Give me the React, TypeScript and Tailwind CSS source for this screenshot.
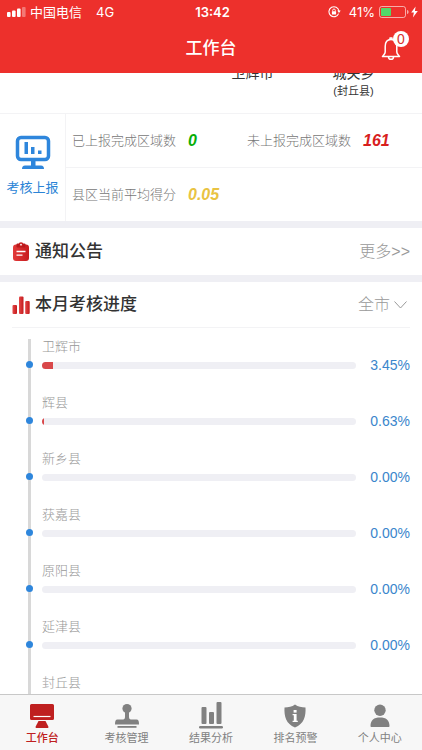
import React from "react";

const sans = "font-['Liberation_Sans','Noto_Sans_CJK_SC',sans-serif]";

const regions = [
  { name: "卫辉市", value: 3.45 },
  { name: "辉县", value: 0.63 },
  { name: "新乡县", value: 0 },
  { name: "获嘉县", value: 0 },
  { name: "原阳县", value: 0 },
  { name: "延津县", value: 0 },
  { name: "封丘县", value: 0 },
];

function StatusBar() {
  return (
    <div className="grid h-6 grid-cols-[1fr_auto_1fr] items-center pr-1 pl-[7px] font-['Inter','Noto_Sans_CJK_SC',sans-serif] text-[13px] leading-6">
      <div className="flex items-center">
        <svg width="19" height="10" viewBox="0 0 19 10" fill="white" aria-hidden="true">
          <rect x="0" y="5" width="3.6" height="5" rx="1" />
          <rect x="5" y="3.5" width="3.6" height="6.5" rx="1" />
          <rect x="10" y="1.5" width="3.6" height="8.5" rx="1" />
          <rect x="15" y="0" width="3.6" height="10" rx="1" opacity="0.35" />
        </svg>
        <span className="ml-1">中国电信</span>
        <span className="ml-3.5">4G</span>
      </div>
      <span className="font-semibold">13:42</span>
      <div className="flex items-center justify-end">
        <svg width="13" height="12" viewBox="0 0 13 12" fill="none" stroke="white" aria-hidden="true">
          <path d="M10.6 7.6A5 5 0 1 1 10.9 5" strokeWidth="1.1" />
          <path d="M9.3 4.6h3.4L11 6.9z" fill="white" stroke="none" />
          <rect x="3.9" y="5.3" width="4.2" height="3.3" rx="0.4" fill="white" stroke="none" />
          <path d="M4.7 5.5V4.3a1.3 1.3 0 0 1 2.6 0v1.2" strokeWidth="0.9" />
        </svg>
        <span className="ml-2">41%</span>
        <svg className="ml-1" width="30" height="12" viewBox="0 0 30 12" aria-hidden="true">
          <rect x="0.5" y="0.5" width="26" height="11" rx="2.2" fill="none" stroke="white" opacity="0.6" />
          <rect x="2" y="2" width="10" height="8" rx="0.8" fill="#53d769" />
          <path d="M28 4v4c1.2-.4 1.6-1.2 1.6-2S29.2 4.4 28 4z" fill="white" opacity="0.6" />
        </svg>
        <svg className="ml-0.5" width="7" height="12" viewBox="0 0 7 12" fill="white" aria-hidden="true">
          <path d="M4.6 0.5 0.2 6.6h2.7L1.9 11.5 6.8 5.1H3.9z" />
        </svg>
      </div>
    </div>
  );
}

function Header() {
  return (
    <header className="shrink-0 bg-[#ed302c] text-white">
      <StatusBar />
      <div className="grid h-[49px] grid-cols-[1fr_auto_1fr] items-center px-[13px]">
        <h1 className="col-start-2 text-[17px] font-medium">工作台</h1>
        <button type="button" aria-label="消息" className="relative mb-1 h-8 w-7 justify-self-end">
          <svg width="20" height="26" viewBox="0 0 20 26" fill="none" stroke="white" strokeWidth="1.5" strokeLinejoin="round" className="mt-1" aria-hidden="true">
            <path d="M10 3.5C6 3.500 4.200 6.800 4.200 10.500v5.600c0 1.900-1.600 2.700-2.700 4.400h17c-1.100-1.700-2.700-2.500-2.700-4.400v-5.600c0-3.700-1.800-7-5.800-7z" />
            <path d="M7.500 20.700c0 3.500 5 3.500 5 0" />
            <path d="M9 3.200V2h2v1.200" />
          </svg>
          <span className="absolute top-0 right-0 flex size-4 items-center justify-center rounded-full bg-white text-sm leading-4 text-[#dd302c]">0</span>
        </button>
      </div>
    </header>
  );
}

function Stat({ label, value, color }: { label: string; value: string; color: string }) {
  return (
    <div className="flex items-center gap-3">
      <dt className="text-[13px] font-light text-[#777]">{label}</dt>
      <dd className={`text-base font-bold italic ${color}`}>{value}</dd>
    </div>
  );
}

function Summary() {
  return (
    <section>
      <div className="grid h-[41px] grid-cols-4 content-end overflow-hidden border-b border-[#f3f3f5] pr-[18px] pb-3.5 text-center text-[#333]">
        <div className="col-start-3 text-sm leading-5">卫辉市</div>
        <div>
          <div className="text-sm leading-5">城关乡</div>
          <div className="text-[11px] leading-4">(封丘县)</div>
        </div>
      </div>
      <div className="flex">
        <button type="button" className="flex w-[66px] flex-col items-center border-r border-[#f3f3f5] pt-[21px] text-[#2b84d6]">
          <svg width="36" height="36" viewBox="0 0 36 36" fill="none" aria-hidden="true">
            <rect x="2.5" y="2.5" width="31" height="22" rx="3.5" stroke="#2e86dc" strokeWidth="3.5" />
            <path d="M16 25h4.500v5.500h5.500c2 0 3 1.200 3 3.500H7c0-2.300 1-3.500 3-3.500h6z" fill="#2e86dc" />
            <path d="M9.500 7H13v12H9.500zM16 12h3.500v7H16zM23 15.500h3.500V19H23z" fill="#2e86dc" />
          </svg>
          <span className="mt-[7px] text-[13px] leading-5">考核上报</span>
        </button>
        <dl className="flex-1">
          <div className="grid h-[54px] grid-cols-2 items-center border-b border-[#f3f3f5] pl-1.5">
            <Stat label="已上报完成区域数" value="0" color="text-[#08ae08]" />
            <Stat label="未上报完成区域数" value="161" color="text-[#d81e1e]" />
          </div>
          <div className="flex h-[53px] items-center pl-1.5">
            <Stat label="县区当前平均得分" value="0.05" color="text-[#e9c342]" />
          </div>
        </dl>
      </div>
    </section>
  );
}

function Notices() {
  return (
    <section className="border-y-[7px] border-[#efeff4]">
      <div className="flex h-[47px] items-center px-3">
        <svg width="18" height="20" viewBox="0 0 18 20" aria-hidden="true">
          <defs>
            <linearGradient id="clip" x1="0" y1="0" x2="1" y2="0">
              <stop offset="0" stopColor="#e23a3a" />
              <stop offset="1" stopColor="#c71c1e" />
            </linearGradient>
          </defs>
          <rect x="1" y="2.5" width="16" height="16.5" rx="3" fill="url(#clip)" />
          <rect x="4.5" y="1.5" width="9" height="4" rx="1" fill="#b81a1c" />
          <circle cx="9" cy="2.5" r="2.3" fill="#c71c1e" />
          <circle cx="9" cy="2.7" r="0.9" fill="white" />
          <path d="M4.500 9.500h9M4.500 13.200h6" stroke="white" strokeWidth="1.3" />
        </svg>
        <h2 className="ml-[5px] text-[17px] font-medium text-[#333]">通知公告</h2>
        <a href="#notices" className="ml-auto text-base font-light text-[#999]">更多&gt;&gt;</a>
      </div>
    </section>
  );
}

function Progress() {
  return (
    <section>
      <div className="mx-3 flex h-[46px] items-center border-b border-[#f3f3f5]">
        <svg width="18" height="18" viewBox="0 0 18 18" aria-hidden="true">
          <defs>
            <linearGradient id="bars" x1="0" y1="0" x2="1" y2="0">
              <stop offset="0" stopColor="#e44848" />
              <stop offset="1" stopColor="#c41a1c" />
            </linearGradient>
          </defs>
          <rect x="0.5" y="9" width="4.5" height="9" rx="1" fill="url(#bars)" />
          <rect x="7" y="0.5" width="4.5" height="17.5" rx="1" fill="url(#bars)" />
          <rect x="13.2" y="5" width="4.5" height="13" rx="1" fill="url(#bars)" />
        </svg>
        <h2 className="ml-[5px] text-[17px] font-medium text-[#333]">本月考核进度</h2>
        <div className="ml-auto flex items-center">
          <select aria-label="区域" className="appearance-none bg-transparent text-base font-light text-[#999]">
            <option>全市</option>
          </select>
          <svg className="mx-[3px]" width="13" height="8" viewBox="0 0 13 8" fill="none" stroke="#999" aria-hidden="true">
            <path d="M0.500 0.500 6.500 7 12.500 0.500" />
          </svg>
        </div>
      </div>
      <ul className="mt-[11px] pr-3 pl-[26px]">
        {regions.map((r) => (
          <li key={r.name} className="flex h-14">
            <div className="relative flex w-[7px] shrink-0 justify-center">
              <div className="w-[3px] bg-[#d8d8d8]" />
              <span className="absolute top-[22px] left-0 size-[7px] rounded-full bg-[#2e86dc]" />
            </div>
            <div className="ml-[9px] flex-1">
              <div className="text-[13px] leading-4 font-light text-[#999]">{r.name}</div>
              <div className="mt-[3px] flex h-[14px] items-center">
                <div className="h-[7px] flex-1 overflow-hidden rounded-sm bg-[#efeff4]">
                  <div className="h-full bg-[#d9484a]" style={{ width: `${r.value}%` }} />
                </div>
                <span className="w-[54px] text-right text-sm leading-[14px] text-[#3a86cc]">{r.value.toFixed(2)}%</span>
              </div>
            </div>
          </li>
        ))}
      </ul>
    </section>
  );
}

const tabs = [
  {
    label: "工作台",
    icon: (
      <>
        <path d="M2.500 2h21a1.500 1.500 0 0 1 1.500 1.500v13a1.500 1.500 0 0 1-1.500 1.500h-21A1.500 1.500 0 0 1 1 16.500v-13A1.500 1.500 0 0 1 2.500 2z" />
        <path d="M9.500 19h7l2.800 5.500c.4.800 0 1.500-.8 1.500H7.500c-.8 0-1.200-.7-.8-1.500z" />
        <path d="M4.500 14.500h17" stroke="white" strokeWidth="1.2" />
      </>
    ),
  },
  {
    label: "考核管理",
    icon: (
      <>
        <circle cx="13" cy="6.500" r="4.600" />
        <path d="M11 9h4v6c0 2 1 2.500 3 2.500h4.500c2 0 2.500 1.500 2.500 5H1c0-3.500.5-5 2.500-5H8c2 0 3-.5 3-2.500z" />
        <path d="M3.500 24h19v1.800h-19z" />
      </>
    ),
  },
  {
    label: "结果分析",
    icon: (
      <>
        <rect x="3.500" y="5" width="5" height="17" rx="1" />
        <rect x="11" y="10" width="5" height="12" rx="1" />
        <rect x="18.500" y="0" width="5" height="22" rx="1" />
        <rect x="1" y="24" width="24" height="2.500" rx="1.200" />
      </>
    ),
  },
  {
    label: "排名预警",
    icon: (
      <>
        <path d="M13 2.500c3 2.200 6.500 3 10.500 3C24 14 22 22 13 25.500 4 22 2 14 2.500 5.500c4 0 7.500-.8 10.500-3z" />
        <rect x="11.600" y="8" width="3" height="2.600" fill="white" />
        <path d="M10.600 12h4v6.800h1.200V20h-5.200v-1.200h1.200v-5.600h-1.200z" fill="white" />
      </>
    ),
  },
  {
    label: "个人中心",
    icon: (
      <>
        <circle cx="13" cy="8.200" r="5.700" />
        <path d="M3.500 24c0-6 3.500-8.500 9.500-8.500s9.500 2.500 9.500 8.500c0 .8-.4 1-1.200 1H4.700c-.8 0-1.200-.2-1.200-1z" />
      </>
    ),
  },
];

function TabBar() {
  return (
    <nav className="grid h-14 shrink-0 grid-cols-5 border-t border-[#c8c8c8] bg-[#f7f7f7]">
      {tabs.map((tab, i) => (
        <button
          key={tab.label}
          type="button"
          className={`flex flex-col items-center pt-[7px] ${i === 0 ? "font-medium text-[#bf2020]" : "text-[#818181]"}`}
        >
          <svg width="26" height="27" viewBox="0 0 26 27" fill="currentColor" aria-hidden="true">
            {tab.icon}
          </svg>
          <span className="mt-px text-[11px] leading-4">{tab.label}</span>
        </button>
      ))}
    </nav>
  );
}

export default function App() {
  return (
    <div className={`flex h-screen flex-col overflow-hidden bg-white ${sans}`}>
      <Header />
      <main className="min-h-0 flex-1 overflow-hidden">
        <Summary />
        <Notices />
        <Progress />
      </main>
      <TabBar />
    </div>
  );
}
